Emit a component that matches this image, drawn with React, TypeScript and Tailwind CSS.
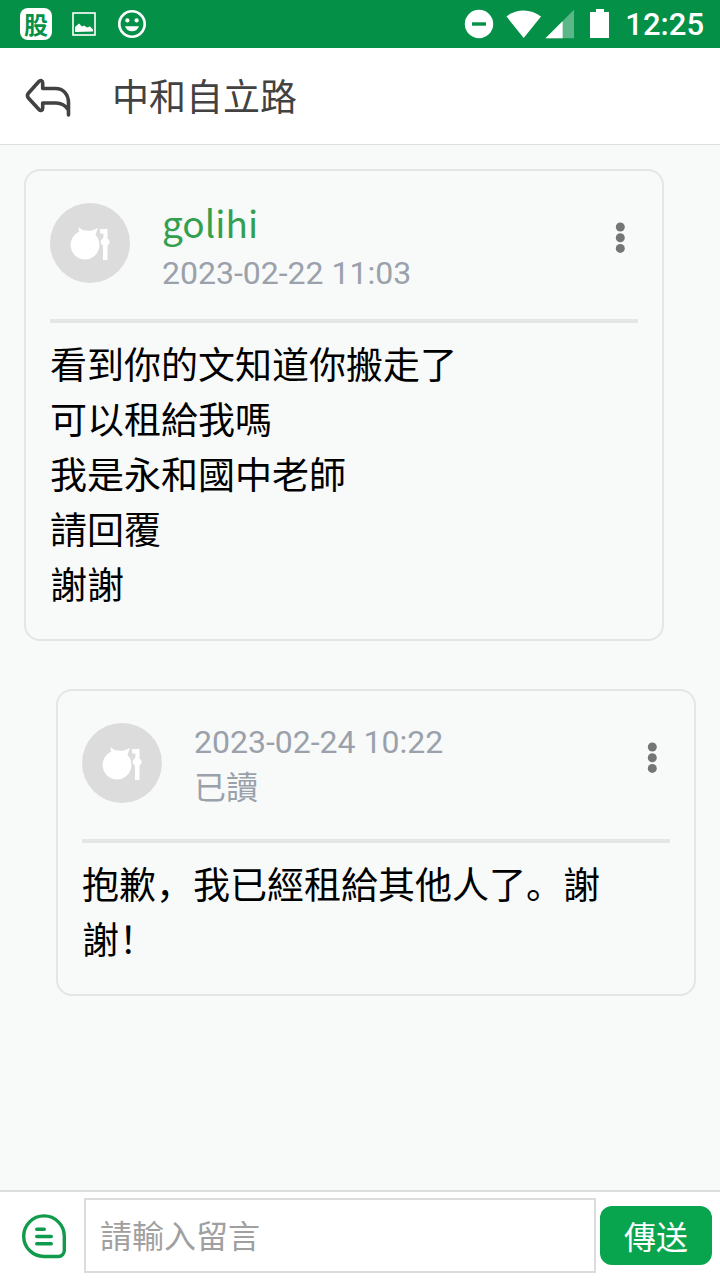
import type { ReactNode } from "react";

const TEXT = "font-['Noto_Sans_CJK_SC','Noto_Sans',sans-serif]";

function StatusBar() {
  return (
    <div className="flex h-12 items-center justify-between bg-[#049147] pl-5 pr-4 text-white">
      <div className="flex items-center gap-5">
        <span className="flex size-8 items-center justify-center rounded-lg bg-white text-2xl font-bold leading-none text-[#049147]">
          股
        </span>
        <svg className="size-6" viewBox="0 0 24 24" aria-hidden="true">
          <rect x="1" y="1" width="22" height="22" fill="none" stroke="currentColor" strokeWidth="1.6" />
          <path d="M3 20v-5l4-3.500 3 3 2-1 3 2 3-1 3 3v2z" fill="currentColor" />
        </svg>
        <svg className="size-8" viewBox="0 0 32 32" aria-hidden="true">
          <circle cx="16" cy="16" r="12.7" fill="none" stroke="currentColor" strokeWidth="2.6" />
          <circle cx="11.4" cy="12.4" r="2.1" fill="currentColor" />
          <circle cx="20.6" cy="12.4" r="2.1" fill="currentColor" />
          <path d="M9 18.3h14c-1 3-3.6 5-7 5s-6-2-7-5z" fill="currentColor" />
        </svg>
      </div>
      <div className="flex items-center">
        <svg className="h-8 w-[148px]" viewBox="0 0 148 32" aria-hidden="true">
          <circle cx="16" cy="16" r="14.2" fill="currentColor" />
          <path d="M9 16h14" stroke="#049147" strokeWidth="3.4" />
          <path d="M43.500 8.500C53 0.500 68 0.500 78 8.500L60.700 30z" fill="currentColor" />
          <path d="M111 1.800V30.300H82.500z" fill="currentColor" fillOpacity="0.35" />
          <path d="M99.600 13.200V30.300H82.500z" fill="currentColor" />
          <path d="M133 1h8v3h5v26h-19V4h6z" fill="currentColor" />
        </svg>
        <span className="ml-3.5 font-['Roboto',sans-serif] text-[31px] font-medium leading-none">12:25</span>
      </div>
    </div>
  );
}

function Avatar() {
  return (
    <svg className="size-20 shrink-0" viewBox="0 0 80 80" aria-hidden="true">
      <circle cx="40" cy="40" r="40" fill="#dcdcdc" />
      <g fill="#fff">
        <circle cx="35" cy="42" r="14.4" />
        <path d="M28.300 24l4.700 3.200q4 1 9 .3l6-2.500-3 8-15-1-1-4z" />
        <path d="M50 26h7.500v9.500a4 4 0 0 1 0 7V57h-4.500V42.500a4 4 0 0 1-.5-7l1-1.500v-3L50 30z" />
      </g>
    </svg>
  );
}

interface MessageProps {
  own?: boolean;
  head: ReactNode;
  lines: string[];
}

function Message({ own, head, lines }: MessageProps) {
  return (
    <article
      className={`rounded-2xl border-2 border-[#e3e6e6] px-6 pb-7 pt-8 ${own ? "ml-8" : "mr-8"}`}
    >
      <header className="flex h-[120px] items-start border-b-4 border-[#e3e6e6]">
        <Avatar />
        <div className="ml-8 flex-1 text-[32px] text-[#9aa1ab]">{head}</div>
        <button type="button" aria-label="更多" className="mr-1 mt-4 flex w-7 justify-center text-[#757575]">
          <svg className="h-9 w-3" viewBox="0 0 12 36" fill="currentColor" aria-hidden="true">
            <circle cx="6.3" cy="8" r="4.5" />
            <circle cx="6.3" cy="18.7" r="4.5" />
            <circle cx="6.3" cy="29.4" r="4.5" />
          </svg>
        </button>
      </header>
      <div className="pt-[13px] text-[37px] leading-[55px] text-black">
        {lines.map((line) => (
          <p key={line}>{line}</p>
        ))}
      </div>
    </article>
  );
}

export default function App() {
  return (
    <div className={`flex min-h-screen flex-col bg-[#f8faf9] ${TEXT}`}>
      <StatusBar />
      <header className="flex h-[97px] items-center border-b border-[#dcdfde] bg-white pl-6">
        <button type="button" aria-label="返回" className="text-[#424242]">
          <svg className="size-12" viewBox="0 0 48 48" fill="none" aria-hidden="true">
            <path
              d="M18.700 16.500V11c0-2.500-2.200-3.200-3.800-1.500L4.600 21c-1.600 1.800-1.600 3.400 0 5.200L15 37.500c1.600 1.700 3.700 1 3.700-1.400V31H32c6 0 9.500 2.500 12.500 7V43V31c0-9-5.500-14.500-13-14.500z"
              stroke="currentColor"
              strokeWidth="3.6"
              strokeLinejoin="round"
            />
          </svg>
        </button>
        <h1 className="ml-10 pb-0.5 text-[37px] leading-[55px] text-[#424242]">中和自立路</h1>
      </header>
      <main className="flex flex-1 flex-col gap-12 px-6 pt-6">
        <Message
          head={
            <>
              <p className="text-[37px] leading-[38px] text-[#34a04e]">golihi</p>
              <p className="font-['Roboto',sans-serif] leading-[64px]">2023-02-22 11:03</p>
            </>
          }
          lines={["看到你的文知道你搬走了", "可以租給我嗎", "我是永和國中老師", "請回覆", "謝謝"]}
        />
        <Message
          own
          head={
            <>
              <p className="font-['Roboto',sans-serif] leading-[38px]">2023-02-24 10:22</p>
              <p className="leading-[48px]">已讀</p>
            </>
          }
          lines={["抱歉，我已經租給其他人了。謝謝！"]}
        />
      </main>
      <form
        className="flex items-center border-t-2 border-[#dcdcdc] bg-white pb-[7px] pl-5 pr-2 pt-1.5"
        onSubmit={(event) => event.preventDefault()}
      >
        <button type="button" aria-label="常用留言" className="mr-4 shrink-0 text-[#109a4b]">
          <svg className="size-12" viewBox="0 0 48 48" fill="none" stroke="currentColor" aria-hidden="true">
            <path
              d="M24 3.900C35.200 3.900 44.300 13 44.300 24.200V38.500a6 6 0 0 1-6 6H24A20.300 20.300 0 0 1 24 3.900z"
              strokeWidth="3.4"
            />
            <path d="M16.800 17.200h7.400M16.800 24.500h14.400M16.800 31.800h14.400" strokeWidth="3.600" strokeLinecap="round" />
          </svg>
        </button>
        <input
          type="text"
          aria-label="留言"
          placeholder="請輸入留言"
          className="h-[75px] min-w-0 flex-1 border-2 border-[#dcdcdc] bg-white px-3.5 pb-1 text-[32px] text-black outline-none placeholder:text-[#a0a0a0]"
        />
        <button
          type="submit"
          className="ml-1 h-[59px] w-28 rounded-xl bg-[#08a54e] pb-0.5 text-[32px] leading-none text-white"
        >
          傳送
        </button>
      </form>
    </div>
  );
}
